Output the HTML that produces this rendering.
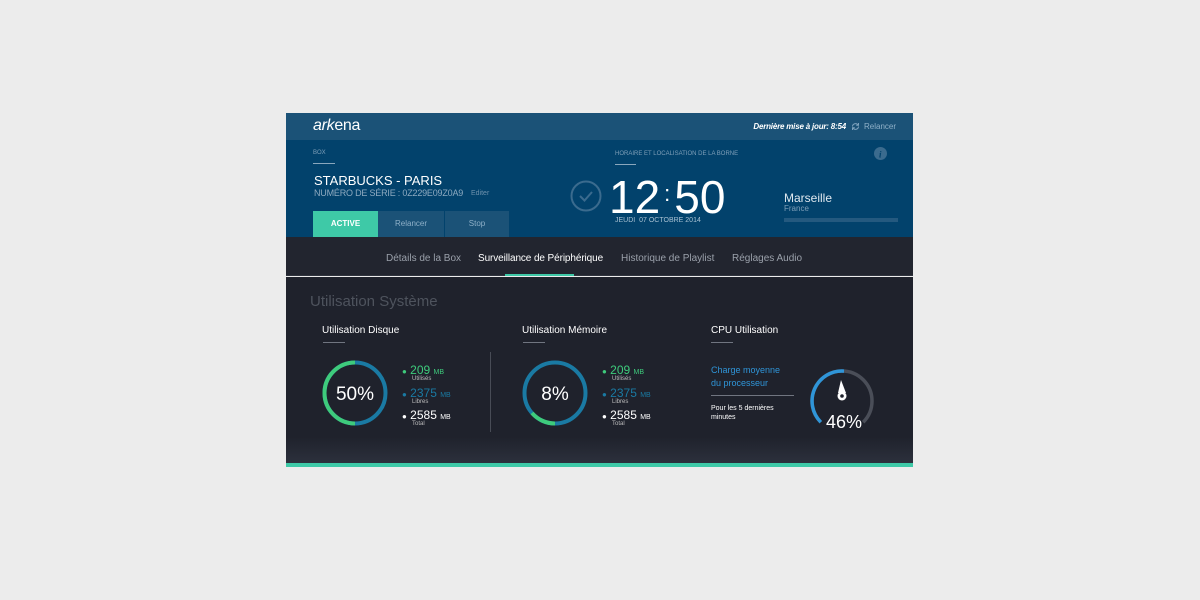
<!DOCTYPE html>
<html><head><meta charset="utf-8"><style>
*{margin:0;padding:0;box-sizing:border-box}
body{width:1200px;height:600px;background:#ececec;font-family:"Liberation Sans",sans-serif;position:relative;overflow:hidden}
.a{position:absolute;white-space:nowrap}
</style></head><body>
<div class="a" style="left:286px;top:113px;width:627px;height:354px;overflow:hidden">
 <div class="a" style="left:0;top:0;width:627px;height:27px;background:#1b5277"></div>
 <div class="a" style="left:0;top:27px;width:627px;height:97px;background:#02426c"></div>
 <div class="a" style="left:0;top:124px;width:627px;height:39px;background:#22252f;border-bottom:1px solid #30343e"></div>
 <div class="a" style="left:0;top:164px;width:627px;height:186px;background:linear-gradient(#1f222c 0,#1f222c 160px,#2c303c 186px)"></div>
 <div class="a" style="left:0;top:350px;width:627px;height:4px;background:#3ec9a7"></div>
</div>
<div class="a" style="left:313px;top:117px;font-size:16px;color:#fff;font-style:italic;letter-spacing:-0.3px">ark<span style="font-style:normal">ena</span></div>
<div class="a" style="right:354px;top:122px;font-size:8px;color:#fff;font-style:italic;font-weight:bold;letter-spacing:-0.2px">Dernière mise à jour: 8:54</div>
<svg class="a" style="left:851px;top:122px" width="9" height="9"><path d="M1.5 4.5A3 3 0 0 1 7 3M7.5 4.5A3 3 0 0 1 2 6" fill="none" stroke="#7fa3be" stroke-width="1"/><path d="M7.5 1v2.3H5.2M1.5 8V5.7h2.3" fill="none" stroke="#7fa3be" stroke-width="1"/></svg>
<div class="a" style="left:864px;top:122px;font-size:8px;color:#8fb0c8">Relancer</div>
<div class="a" style="left:313px;top:150px;font-size:6px;color:#7f9fb8">BOX</div>
<div class="a" style="left:313px;top:163px;width:22px;height:1px;background:#8aa7bd"></div>
<div class="a" style="left:314px;top:173px;font-size:13px;color:#fff">STARBUCKS - PARIS</div>
<div class="a" style="left:314px;top:188px;font-size:9px;color:#8eaac0;letter-spacing:-0.2px">NUMÉRO DE SÉRIE : 0Z229E09Z0A9</div>
<div class="a" style="left:471px;top:190px;font-size:7px;color:#6f92ad">Editer</div>
<div class="a" style="left:313px;top:211px;width:65px;height:26px;background:#3ec9a7;color:#fff;font-size:8px;font-weight:bold;text-align:center;line-height:26px">ACTIVE</div>
<div class="a" style="left:378px;top:211px;width:66px;height:26px;background:#1b5277;color:#8fb0c8;font-size:8px;text-align:center;line-height:26px">Relancer</div>
<div class="a" style="left:444px;top:211px;width:65px;height:26px;background:#1b5277;color:#8fb0c8;font-size:8px;text-align:center;line-height:26px;border-left:1px solid #02426c">Stop</div>
<svg class="a" style="left:570px;top:180px" width="32" height="32"><circle cx="16" cy="16" r="14.5" fill="none" stroke="#3b6b8e" stroke-width="2"/><path d="M10 16l4.5 4.5L22 12" fill="none" stroke="#3b6b8e" stroke-width="2"/></svg>
<div class="a" style="left:615px;top:151px;font-size:6px;color:#7f9fb8">HORAIRE ET LOCALISATION DE LA BORNE</div>
<div class="a" style="left:615px;top:164px;width:21px;height:1px;background:#8aa7bd"></div>
<div class="a" style="left:609px;top:169px;font-size:46px;color:#fff;line-height:50px">12<span style="font-size:22px;vertical-align:12px;margin:0 4px">:</span>50</div>
<div class="a" style="left:615px;top:217px;font-size:7px;color:#a8c0d2">JEUDI &nbsp;07 OCTOBRE 2014</div>
<svg class="a" style="left:874px;top:147px" width="13" height="13"><circle cx="6.5" cy="6.5" r="6.5" fill="#3b6b8e"/><text x="5" y="10.5" font-size="9" font-style="italic" font-weight="bold" fill="#02426c" font-family="Liberation Serif">i</text></svg>
<div class="a" style="left:784px;top:191px;font-size:12px;color:#dfe8ef">Marseille</div>
<div class="a" style="left:784px;top:204px;font-size:8px;color:#7f9fb8">France</div>
<div class="a" style="left:784px;top:218px;width:114px;height:4px;background:#24597f"></div>
<div class="a" style="left:386px;top:253px;font-size:10px;color:#9aa0aa">Détails de la Box</div>
<div class="a" style="left:478px;top:253px;font-size:10px;color:#fff;letter-spacing:-0.1px">Surveillance de Périphérique</div>
<div class="a" style="left:505px;top:274px;width:69px;height:2px;background:#3ec9a7"></div>
<div class="a" style="left:621px;top:253px;font-size:10px;color:#9aa0aa">Historique de Playlist</div>
<div class="a" style="left:732px;top:253px;font-size:10px;color:#9aa0aa">Réglages Audio</div>
<div class="a" style="left:310px;top:293px;font-size:15px;color:#4e535d">Utilisation Système</div>
<div class="a" style="left:322px;top:325px;font-size:10px;color:#fff">Utilisation Disque</div>
<div class="a" style="left:323px;top:342px;width:22px;height:1px;background:#707580"></div>
<div class="a" style="left:522px;top:325px;font-size:10px;color:#fff">Utilisation Mémoire</div>
<div class="a" style="left:523px;top:342px;width:22px;height:1px;background:#707580"></div>
<div class="a" style="left:711px;top:325px;font-size:10px;color:#fff">CPU Utilisation</div>
<div class="a" style="left:711px;top:342px;width:22px;height:1px;background:#707580"></div>
<div class="a" style="left:490px;top:352px;width:1px;height:80px;background:#484c56"></div>
<svg class="a" style="left:320px;top:358px" width="70" height="70"><circle cx="35" cy="35" r="30.5" fill="none" stroke="#1a7aa3" stroke-width="4"/><path d="M35 65.5A30.5 30.5 0 0 1 35 4.5" fill="none" stroke="#3ecb7c" stroke-width="4"/><text x="35" y="42" text-anchor="middle" font-size="19" fill="#fff" font-family="Liberation Sans">50%</text></svg>
<svg class="a" style="left:520px;top:358px" width="70" height="70"><circle cx="35" cy="35" r="30.5" fill="none" stroke="#1a7aa3" stroke-width="4"/><path d="M35 65.5A30.5 30.5 0 0 1 12 55" fill="none" stroke="#3ecb7c" stroke-width="4"/><text x="35" y="42" text-anchor="middle" font-size="19" fill="#fff" font-family="Liberation Sans">8%</text></svg>
<div class="a" style="left:402px;top:363px;font-size:12px;line-height:14px;color:#3ecb7c"><span style="font-size:8px">●</span> 209 <span style="font-size:7px">MB</span></div>
<div class="a" style="left:412px;top:376px;font-size:6px;color:#bbb">Utilisés</div>
<div class="a" style="left:402px;top:386px;font-size:12px;line-height:14px;color:#1a7aa3"><span style="font-size:8px">●</span> 2375 <span style="font-size:7px">MB</span></div>
<div class="a" style="left:412px;top:399px;font-size:6px;color:#bbb">Libres</div>
<div class="a" style="left:402px;top:408px;font-size:12px;line-height:14px;color:#fff"><span style="font-size:8px">●</span> 2585 <span style="font-size:7px">MB</span></div>
<div class="a" style="left:412px;top:421px;font-size:6px;color:#bbb">Total</div>
<div class="a" style="left:602px;top:363px;font-size:12px;line-height:14px;color:#3ecb7c"><span style="font-size:8px">●</span> 209 <span style="font-size:7px">MB</span></div>
<div class="a" style="left:612px;top:376px;font-size:6px;color:#bbb">Utilisés</div>
<div class="a" style="left:602px;top:386px;font-size:12px;line-height:14px;color:#1a7aa3"><span style="font-size:8px">●</span> 2375 <span style="font-size:7px">MB</span></div>
<div class="a" style="left:612px;top:399px;font-size:6px;color:#bbb">Libres</div>
<div class="a" style="left:602px;top:408px;font-size:12px;line-height:14px;color:#fff"><span style="font-size:8px">●</span> 2585 <span style="font-size:7px">MB</span></div>
<div class="a" style="left:612px;top:421px;font-size:6px;color:#bbb">Total</div>
<div class="a" style="left:711px;top:364px;font-size:9px;line-height:13px;color:#2f95d8">Charge moyenne<br>du processeur</div>
<div class="a" style="left:711px;top:395px;width:83px;height:1px;background:#707580"></div>
<div class="a" style="left:711px;top:404px;font-size:7px;line-height:9px;color:#fff">Pour les 5 dernières<br>minutes</div>
<svg class="a" style="left:806px;top:365px" width="72" height="72"><path d="M14.8 57.2A30 30 0 1 1 57.2 57.2" fill="none" stroke="#4a4e58" stroke-width="3.5"/><path d="M14.8 57.2A30 30 0 0 1 38 6.1" fill="none" stroke="#2f95d8" stroke-width="3.5"/><path d="M35 15L40 28L32 28Z" fill="#fff"/><circle cx="36" cy="31" r="4.5" fill="#fff"/><circle cx="36" cy="31" r="1.8" fill="#1f222c"/><text x="38" y="63" text-anchor="middle" font-size="18" fill="#fff" font-family="Liberation Sans">46%</text></svg>
</body></html>
